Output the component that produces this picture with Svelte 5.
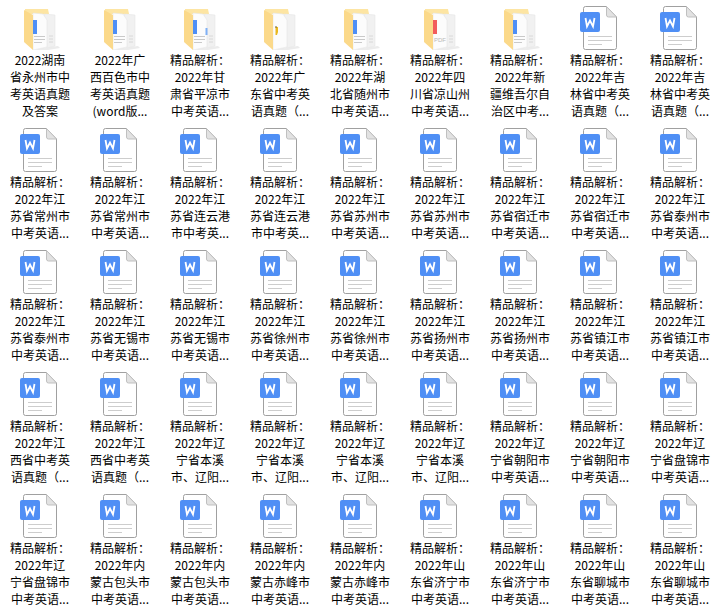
<script>
  const head = '精品解析：';

  // tile lines: head plus three more, icon is a folder variant or the word page
  const p = (a, b, c, icon = 'word') => ({ lines: [head, a, b, c], icon });
  const jiangsu = (city, more = '中考英语...') => p('2022年江', city, more);

  const files = [
    { lines: ['2022湖南', '省永州市中', '考英语真题', '及答案'], icon: 'blue' },
    { lines: ['2022年广', '西百色市中', '考英语真题', '(word版...'], icon: 'blue' },
    p('2022年甘', '肃省平凉市', '中考英语...', 'double'),
    p('2022年广', '东省中考英', '语真题（...', 'pin'),
    p('2022年湖', '北省随州市', '中考英语...', 'blue'),
    p('2022年四', '川省凉山州', '中考英语...', 'red'),
    p('2022年新', '疆维吾尔自', '治区中考...', 'blue'),
    p('2022年吉', '林省中考英', '语真题（...'),
    p('2022年吉', '林省中考英', '语真题（...'),

    jiangsu('苏省常州市'),
    jiangsu('苏省常州市'),
    jiangsu('苏省连云港', '市中考英...'),
    jiangsu('苏省连云港', '市中考英...'),
    jiangsu('苏省苏州市'),
    jiangsu('苏省苏州市'),
    jiangsu('苏省宿迁市'),
    jiangsu('苏省宿迁市'),
    jiangsu('苏省泰州市'),

    jiangsu('苏省泰州市'),
    jiangsu('苏省无锡市'),
    jiangsu('苏省无锡市'),
    jiangsu('苏省徐州市'),
    jiangsu('苏省徐州市'),
    jiangsu('苏省扬州市'),
    jiangsu('苏省扬州市'),
    jiangsu('苏省镇江市'),
    jiangsu('苏省镇江市'),

    p('2022年江', '西省中考英', '语真题（...'),
    p('2022年江', '西省中考英', '语真题（...'),
    p('2022年辽', '宁省本溪', '市、辽阳...'),
    p('2022年辽', '宁省本溪', '市、辽阳...'),
    p('2022年辽', '宁省本溪', '市、辽阳...'),
    p('2022年辽', '宁省本溪', '市、辽阳...'),
    p('2022年辽', '宁省朝阳市', '中考英语...'),
    p('2022年辽', '宁省朝阳市', '中考英语...'),
    p('2022年辽', '宁省盘锦市', '中考英语...'),

    p('2022年辽', '宁省盘锦市', '中考英语...'),
    p('2022年内', '蒙古包头市', '中考英语...'),
    p('2022年内', '蒙古包头市', '中考英语...'),
    p('2022年内', '蒙古赤峰市', '中考英语...'),
    p('2022年内', '蒙古赤峰市', '中考英语...'),
    p('2022年山', '东省济宁市', '中考英语...'),
    p('2022年山', '东省济宁市', '中考英语...'),
    p('2022年山', '东省聊城市', '中考英语...'),
    p('2022年山', '东省聊城市', '中考英语...')
  ];
</script>

<div class="grid">
  {#each files as file}
    <div class="tile">
      {#if file.icon === 'word'}
        <svg class="icon" width="48" height="48" viewBox="0 0 48 48">
          <path d="M7.500 6.500a2 2 0 0 1 2-2h21l10 10.500v30.500a2 2 0 0 1-2 2h-29a2 2 0 0 1-2-2z" fill="#fff" stroke="#a0a0a0" />
          <path d="M30.500 4.500v8.500a2 2 0 0 0 2 2h8z" fill="#e2e2e2" stroke="#c0c0c0" />
          <path d="M12 34.500h24M12 38.500h24M12 42.500h14" stroke="#cdcdcd" fill="none" />
          <rect x="4" y="10" width="20" height="20" rx="2" fill="#4f8ff5" />
          <path d="M9.500 16l1.500 8.500 3-6 3 6 1.500-8.500" fill="none" stroke="#fff" stroke-width="1.800" />
        </svg>
      {:else}
        <svg class="icon" width="48" height="48" viewBox="0 0 48 48">
          <path d="M9 7h23l1 5h-24z" fill="#fde5a3" />
          <path d="M18 47l24-3 2 2-18 3z" fill="#ececec" />
          <path d="M28 12l11 1v31l-8 2z" fill="#f1f1f1" stroke="#e6e6e6" stroke-width="0.600" />
          <path d="M17 11l10 1 4 6v27l-14 3z" fill="#fcfcfc" stroke="#e4e4e4" stroke-width="0.600" />
          <path d="M8 8l9 5v35l-9-8z" fill="#fbd98a" />
          {#if file.icon === 'pin'}
            <path d="M19.500 25h2.500v5l-1 3h-1.500z" fill="#e8b820" />
            <path d="M19.500 24h1v2h-1z" fill="#706030" />
          {:else}
            <rect x="17" y="18" width="4" height="14" fill={file.icon === 'red' ? '#f25c5c' : '#4f8ff5'} />
          {/if}
          {#if file.icon === 'red'}
            <text x="18" y="40" class="pdf">PDF</text>
          {:else if file.icon !== 'pin'}
            <path d="M18 34.500h11M18 37.500h11M18 40.500h8" stroke="#c9c9c9" fill="none" />
          {/if}
          {#if file.icon === 'double'}
            <rect x="29.500" y="26" width="2" height="7" fill="#7fb0f5" />
          {/if}
          {#if file.icon !== 'pin'}
            <path d="M33 34h4M33 37h4M33 40h4" stroke="#d8d8d8" fill="none" />
          {/if}
        </svg>
      {/if}
      <div class="name">
        {#each file.lines as line}
          <div>{line}</div>
        {/each}
      </div>
    </div>
  {/each}
</div>

<style>
  :global(body) {
    background: #ffffff;
    overflow: hidden;
  }

  .grid {
    width: 720px;
    height: 614px;
    padding-top: 2px;
    box-sizing: border-box;
    display: grid;
    grid-template-columns: repeat(9, 80px);
    grid-auto-rows: 122px;
  }

  .tile {
    display: flex;
    flex-direction: column;
    align-items: center;
  }

  .icon {
    display: block;
    flex: none;
  }

  .pdf {
    font-family: "Liberation Sans", sans-serif;
    font-size: 6px;
    fill: #b8b8b8;
  }

  .name {
    margin-top: 0.500px;
    width: 80px;
    font-family: "Noto Sans CJK SC", "Liberation Sans", sans-serif;
    font-size: 12px;
    line-height: 17.330px;
    color: #000000;
    text-align: center;
    white-space: nowrap;
  }
</style>
